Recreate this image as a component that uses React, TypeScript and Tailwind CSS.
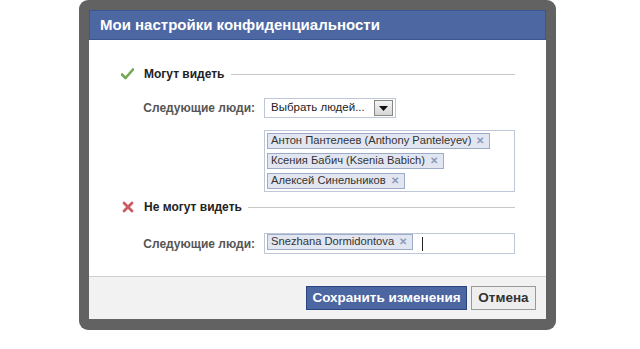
import React from "react";

const font = { fontFamily: '"Liberation Sans", Arial, sans-serif' };

function Token({ name }: { name: string }) {
  return (
    <div className="flex h-[16px] items-center self-start border border-[#9dacc9] bg-[#e2e6f0] pl-[3px] pr-[5px] text-[11.2px] leading-none text-[#333]">
      <span>{name}</span>
      <span className="ml-[5px] text-[10px] font-bold text-[#8a99bd]">✕</span>
    </div>
  );
}

function SectionHeader({ ok, text }: { ok: boolean; text: string }) {
  return (
    <div className="flex h-[16px] items-center pl-[32px] pr-[31px]">
      <div className="flex h-[13px] w-[13px] items-center justify-center">
        {ok ? (
          <svg width="13" height="12" viewBox="0 0 13 12">
            <path d="M1 6.5 L4.5 10 L12 1.5" fill="none" stroke="#72a852" strokeWidth="2.6" strokeLinecap="round" strokeLinejoin="round" />
          </svg>
        ) : (
          <svg width="12" height="12" viewBox="0 0 12 12">
            <path d="M2 2 L10 10 M10 2 L2 10" fill="none" stroke="#cc5a63" strokeWidth="2.8" strokeLinecap="round" />
          </svg>
        )}
      </div>
      <span className="ml-[10px] whitespace-nowrap text-[12px] font-bold text-[#222]">{text}</span>
      <div className="ml-[6px] h-px flex-1 bg-[#c8c8c8]" />
    </div>
  );
}

export default function App() {
  return (
    <div className="h-[349px] w-[640px] overflow-hidden bg-white pl-[79px]" style={font}>
      <div className="flex h-[330px] w-[477px] flex-col rounded-[9px] bg-[#626262] pb-[11px] pl-[10px] pr-[10px] pt-[10px]">
        <div className="flex flex-1 flex-col bg-white">
          <div className="flex h-[30px] items-center border border-[#3a5795] bg-[#4d67a3] pl-[10px] text-[15px] font-bold text-white">
            Мои настройки конфиденциальности
          </div>
          <div className="flex flex-1 flex-col pt-[26px]">
            <SectionHeader ok text="Могут видеть" />
            <div className="mt-[16px] flex items-center">
              <div className="w-[166px] text-right text-[12px] font-bold text-[#555]">Следующие люди:</div>
              <div className="ml-[9px] flex h-[20px] w-[132px] items-center border border-[#bdc7d8] bg-white pl-[6px] pr-[2px]">
                <span className="flex-1 text-[11.5px] text-[#222]">Выбрать людей...</span>
                <div className="flex h-[16px] w-[19px] items-center justify-center border border-[#888] bg-gradient-to-b from-[#f4f4f4] to-[#d6d6d6]">
                  <svg width="9" height="5" viewBox="0 0 9 5">
                    <path d="M0 0 L9 0 L4.5 5 Z" fill="#111" />
                  </svg>
                </div>
              </div>
            </div>
            <div className="ml-[175px] mt-[12px] flex h-[62px] w-[251px] flex-col gap-[4px] border border-[#bdc7d8] pl-[2px] pt-[2px]">
              <Token name="Антон Пантелеев (Anthony Panteleyev)" />
              <Token name="Ксения Бабич (Ksenia Babich)" />
              <Token name="Алексей Синельников" />
            </div>
            <div className="mt-[7px]">
              <SectionHeader ok={false} text="Не могут видеть" />
            </div>
            <div className="mt-[18px] flex items-center">
              <div className="w-[166px] text-right text-[12px] font-bold text-[#555]">Следующие люди:</div>
              <div className="ml-[9px] flex h-[21px] w-[251px] items-center border border-[#bdc7d8] pl-[2px]">
                <Token name="Snezhana Dormidontova" />
                <div className="ml-[9px] h-[14px] w-px bg-[#222]" />
              </div>
            </div>
          </div>
          <div className="flex h-[43px] items-start justify-end gap-[4px] border-t border-[#cfcfcf] bg-[#f2f2f2] pr-[10px] pt-[9px]">
            <div className="flex h-[24px] w-[161px] items-center justify-center border border-[#29447e] bg-[#4c66a2] text-[13.5px] font-bold text-white">
              Сохранить изменения
            </div>
            <div className="flex h-[24px] w-[65px] items-center justify-center border border-[#999] bg-[#eeeeee] text-[13.5px] font-bold text-[#333]">
              Отмена
            </div>
          </div>
        </div>
      </div>
    </div>
  );
}
